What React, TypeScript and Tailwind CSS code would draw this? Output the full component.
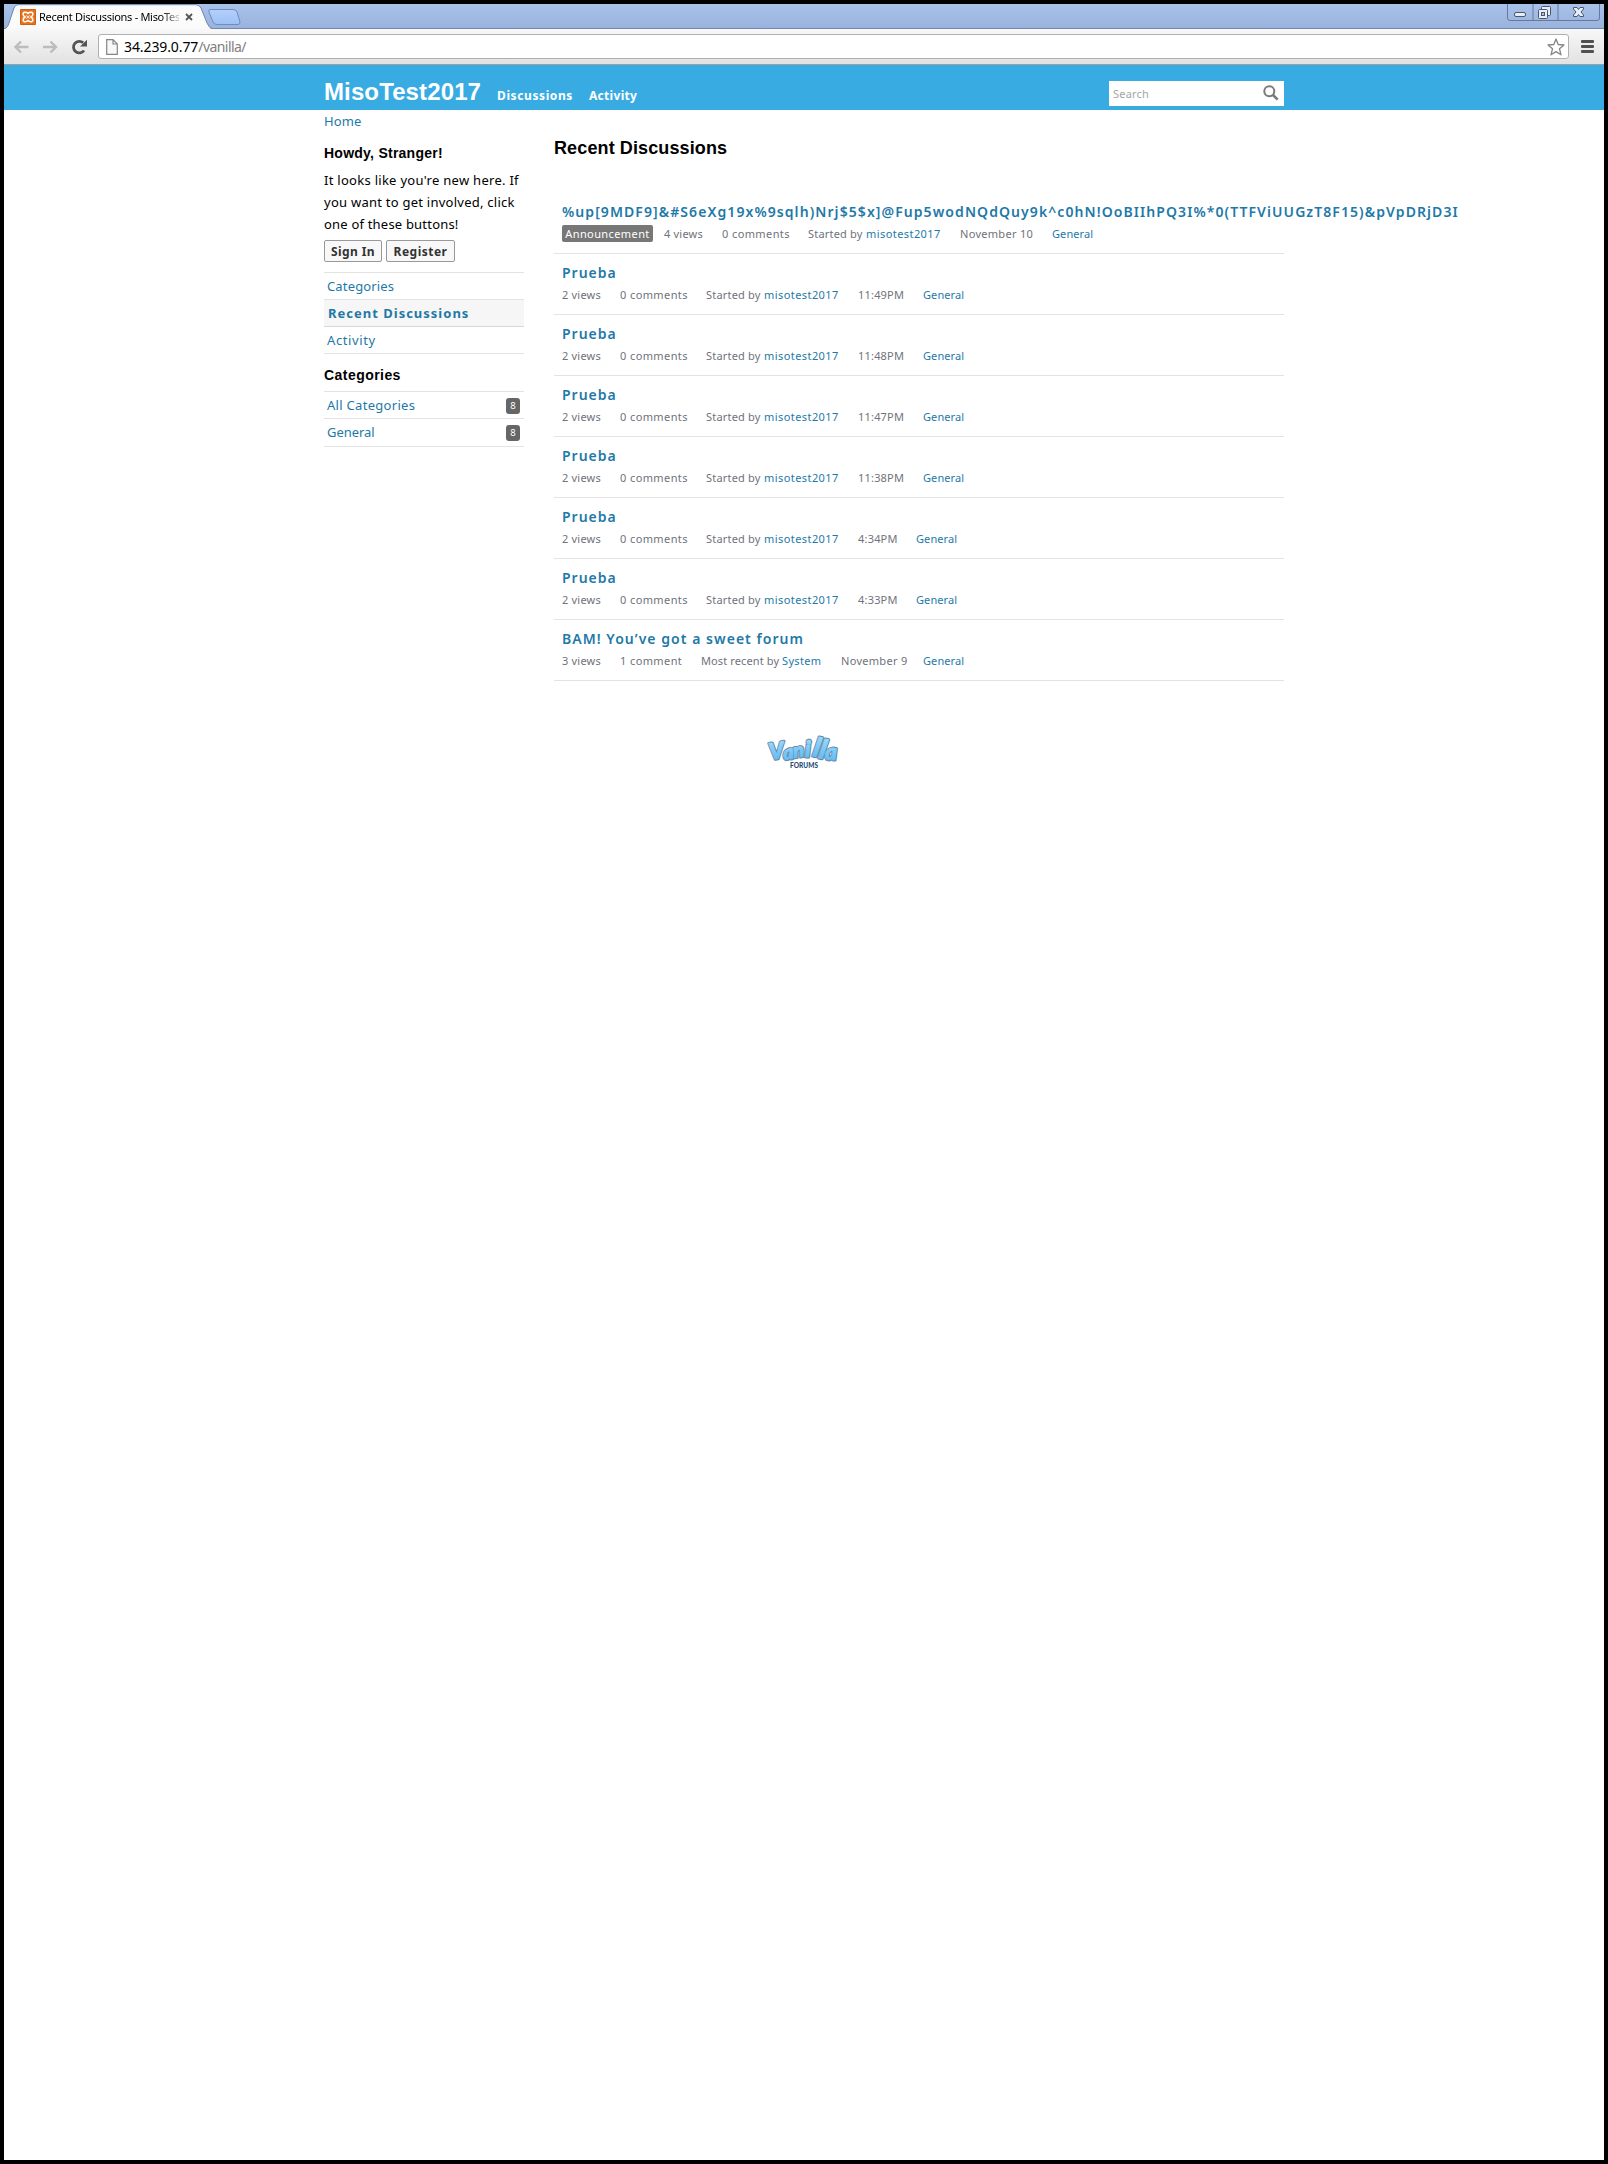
type Discussion = {
  title: string;
  titleClass: string;
  announcement?: boolean;
  views: string;
  comments: string;
  commentsClass: string;
  label: string;
  labelClass: string;
  author: string;
  authorClass: string;
  date: string;
  dateClass: string;
};

const prueba = (date: string, dateClass: string): Discussion => ({
  title: 'Prueba',
  titleClass: 'tracking-[1px]',
  views: '2 views',
  comments: '0 comments',
  commentsClass: 'w-[86px] tracking-[0.4px]',
  label: 'Started by',
  labelClass: 'w-[58px]',
  author: 'misotest2017',
  authorClass: 'w-[94px] tracking-[0.43px]',
  date,
  dateClass,
});

const discussions: Discussion[] = [
  {
    ...prueba('November 10', 'w-[92px] tracking-[0.3px]'),
    title: '%up[9MDF9]&#S6eXg19x%9sqlh)Nrj$5$x]@Fup5wodNQdQuy9k^c0hN!OoBIIhPQ3I%*0(TTFViUUGzT8F15)&pVpDRjD3I',
    titleClass: 'tracking-[1.075px]',
    announcement: true,
    views: '4 views',
  },
  prueba('11:49PM', 'w-[65px]'),
  prueba('11:48PM', 'w-[65px]'),
  prueba('11:47PM', 'w-[65px]'),
  prueba('11:38PM', 'w-[65px]'),
  prueba('4:34PM', 'w-[58px]'),
  prueba('4:33PM', 'w-[58px]'),
  {
    title: 'BAM! You’ve got a sweet forum',
    titleClass: 'tracking-[1.04px]',
    views: '3 views',
    comments: '1 comment',
    commentsClass: 'w-[81px] tracking-[0.4px]',
    label: 'Most recent by',
    labelClass: 'w-[81px] tracking-[0.12px]',
    author: 'System',
    authorClass: 'w-[59px] tracking-[0.35px]',
    date: 'November 9',
    dateClass: 'w-[82px] tracking-[0.3px]',
  },
];

function TabStrip() {
  return (
    <div className="relative flex h-[25px] border-b border-[#7187ae] bg-linear-to-b from-[#a9c2ea] to-[#9ab3de]">
      <svg className="absolute left-0 top-0" width="260" height="25" viewBox="0 0 260 25">
        <defs>
          <linearGradient id="newtab" x1="0" y1="0" x2="0" y2="1">
            <stop offset="0" stopColor="#b3d0fb" />
            <stop offset="1" stopColor="#9cc0f5" />
          </linearGradient>
        </defs>
        <path d="M0 25C3 24 4 22 5 19L10 4Q11 .7 14 .7H192Q195 .7 197 4L203 19Q205 24 209 25Z" fill="#fbfbfb" stroke="#7187ae" />
        <rect x="2" y="24" width="204" height="1" fill="#f8f8f8" />
        <path d="M206 5.500H229Q232 5.500 233 8L236 18Q236 20.500 234 20.500H213Q210 20.500 209 18L205 8Q204 5.500 206 5.500Z" fill="url(#newtab)" stroke="#6f8cbb" />
      </svg>
      <div className="relative ml-4 mt-[5px] flex h-4 items-center">
        <svg width="16" height="16" viewBox="0 0 16 16">
          <rect width="16" height="16" rx="1" fill="#e8731c" />
          <rect x="0.500" y="0.500" width="15" height="15" rx="1" fill="none" stroke="#cf5f12" />
          <path d="M8 4.500Q6.500 3 4.500 3.300Q2.600 4 3.300 6Q3.800 7.300 5 8Q3.800 8.700 3.300 10Q2.600 12 4.500 12.700Q6.500 13 8 11.500Q9.500 13 11.500 12.700Q13.400 12 12.700 10Q12.200 8.700 11 8Q12.200 7.300 12.700 6Q13.400 4 11.500 3.300Q9.500 3 8 4.500ZM6.500 6V6.600M9.500 6V6.600M6.500 9.400V10M9.500 9.400V10M6.800 8H9.200" fill="none" stroke="#fff" strokeWidth="1.500" />
        </svg>
        <span className="ml-[3px] w-[140px] overflow-hidden whitespace-nowrap bg-linear-to-r from-black from-85% to-[#ccc] bg-clip-text font-['Noto_Sans'] text-[11px] leading-4 tracking-[-0.3px] text-transparent">
          Recent Discussions - MisoTes
        </span>
        <svg className="ml-[6px]" width="8" height="8" viewBox="0 0 8 8">
          <path d="M1 1L7 7M7 1L1 7" stroke="#555" strokeWidth="1.800" />
        </svg>
      </div>
      <svg className="absolute right-1 top-0" width="93" height="18" viewBox="0 0 93 18">
        <path d="M.5 0V14Q.5 16.500 3 16.500H90Q92.500 16.500 92.500 14V0M26 0V16M51 0V16" fill="none" stroke="#667a9d" />
        <g fill="#e6eefb" stroke="#4c5669">
          <rect x="7.500" y="8.500" width="11" height="4" rx="1.500" />
          <rect x="34.500" y="2.500" width="9" height="9" rx="1" />
          <rect x="31.500" y="5.500" width="9" height="9" rx="1" />
          <rect x="34.500" y="8.500" width="3" height="3" fill="#a9c2ea" />
          <path d="M66.500 3.500H70L71.500 5.500L73 3.500H76.500V5L74 8L76.500 11V12.500H73L71.500 10.500L70 12.500H66.500V11L69 8L66.500 5Z" />
        </g>
      </svg>
    </div>
  );
}

function Toolbar() {
  return (
    <div className="flex h-9 items-center border-b border-[#a0a0a0] bg-linear-to-b from-[#f8f8f8] to-[#e2e2e2]">
      <svg className="ml-[9px]" width="16" height="14" viewBox="0 0 16 14">
        <path d="M15.500 7H3M8 1.500L2.500 7L8 12.500" fill="none" stroke="#bcbcbc" strokeWidth="2.400" />
      </svg>
      <svg className="ml-[13px]" width="16" height="14" viewBox="0 0 16 14">
        <path d="M1 7H14M8.500 1.500L14 7L8.500 12.500" fill="none" stroke="#bcbcbc" strokeWidth="2.400" />
      </svg>
      <svg className="ml-[13px]" width="17" height="16" viewBox="0 0 17 16">
        <path d="M13 11.500A5.800 5.800 0 1 1 12.200 3.800" fill="none" stroke="#545454" strokeWidth="2.800" />
        <path d="M16 .8V7.500H9Z" fill="#545454" />
      </svg>
      <div className="ml-[10px] flex h-[25px] w-[1471px] items-center rounded-[3px] border border-[#b0b0b0] bg-white">
        <svg className="ml-[7px]" width="12" height="16" viewBox="0 0 12 16">
          <path d="M.7 .7H7L11.300 5V15.300H.7ZM7 .7V5H11.300" fill="#f8f8f8" stroke="#858585" strokeWidth="1.200" />
        </svg>
        <span className="ml-[6px] font-['Noto_Sans'] text-[14px] leading-5 tracking-[-0.1px] text-black">
          34.239.0.77<span className="tracking-[-0.55px] text-[#808080]">/vanilla/</span>
        </span>
        <svg className="ml-auto mr-[3px]" width="18" height="18" viewBox="0 0 18 18">
          <path d="M9 1L11.200 6.500L17 7L12.500 10.800L14 16.800L9 13.600L4 16.800L5.500 10.800L1 7L6.800 6.500Z" fill="#fff" stroke="#858585" strokeWidth="1.300" strokeLinejoin="round" />
        </svg>
      </div>
      <div className="ml-[12px] flex flex-col gap-[2px]">
        <i className="h-[3px] w-[13px] rounded-[1px] bg-[#505050]" />
        <i className="h-[3px] w-[13px] rounded-[1px] bg-[#505050]" />
        <i className="h-[3px] w-[13px] rounded-[1px] bg-[#505050]" />
      </div>
    </div>
  );
}

function SiteHeader() {
  return (
    <header className="h-[45px] bg-[#38abe3]">
      <div className="mx-auto flex h-full w-[960px] text-white">
        <h1 className="w-[173px] pt-[13px] font-['Liberation_Sans'] text-2xl font-bold leading-[28px] tracking-[0.12px]">MisoTest2017</h1>
        <nav className="flex pt-[21px] font-['Noto_Sans'] text-xs font-bold leading-5">
          <a className="w-[92px] tracking-[0.6px]">Discussions</a>
          <a className="tracking-[0.3px]">Activity</a>
        </nav>
        <div className="ml-auto mt-4 flex h-[25px] w-[175px] justify-between bg-white pl-1 pr-[5px]">
          <span className="pt-[2px] font-['Noto_Sans'] text-[11px] leading-[21px] tracking-[0.2px] text-[#a5a5a5]">Search</span>
          <svg className="mt-1" width="16" height="16" viewBox="0 0 16 16">
            <circle cx="6.300" cy="6.200" r="5" fill="none" stroke="#7b7b7b" strokeWidth="2" />
            <path d="M10 10L14.700 14.700" stroke="#7b7b7b" strokeWidth="2.600" />
          </svg>
        </div>
      </div>
    </header>
  );
}

function Count() {
  return <span className="mr-1 h-4 w-[14px] rounded-[3px] bg-[#666] text-center text-[9.500px] leading-4 text-white">8</span>;
}

function Sidebar() {
  return (
    <aside className="w-[200px] font-['Noto_Sans'] text-[13px]">
      <h4 className="mt-[10px] font-['Liberation_Sans'] text-sm font-bold leading-5 tracking-[0.25px] text-black">Howdy, Stranger!</h4>
      <p className="mt-[6px] whitespace-nowrap leading-[22px] text-black">
        <span className="block tracking-[0.28px]">It looks like you're new here. If</span>
        <span className="block tracking-[0.25px]">you want to get involved, click</span>
        <span className="block tracking-[0.2px]">one of these buttons!</span>
      </p>
      <div className="mt-[5px] flex gap-1 font-bold text-[#333]">
        <button className="h-[22px] w-[58px] rounded-[2px] border border-[#999] bg-[#f8f8f8] pt-px text-[12px] leading-5 tracking-[0.4px]">Sign In</button>
        <button className="h-[22px] w-[69px] rounded-[2px] border border-[#999] bg-[#f8f8f8] pt-px text-[12px] leading-5 tracking-[0.5px]">Register</button>
      </div>
      <ul className="mt-[10px] border-t border-[#e3e3e3] text-[#1e79a7]">
        <li className="h-[27px] border-b border-[#e3e3e3] pl-[3px] leading-[27px] tracking-[0.15px]">Categories</li>
        <li className="h-[27px] border-b border-[#d8d8d8] bg-[#f6f6f6] pl-1 font-bold leading-[27px] tracking-[1px]">Recent Discussions</li>
        <li className="h-[27px] border-b border-[#e3e3e3] pl-[3px] leading-[27px] tracking-[0.6px]">Activity</li>
      </ul>
      <h4 className="mt-[11px] font-['Liberation_Sans'] text-sm font-bold leading-5 tracking-[0.45px] text-black">Categories</h4>
      <ul className="mt-[6px] border-t border-[#e3e3e3] text-[#1e79a7]">
        <li className="flex h-[27px] items-center justify-between border-b border-[#e3e3e3] pl-[3px] pt-px tracking-[0.3px]">
          All Categories
          <Count />
        </li>
        <li className="flex h-7 items-center justify-between border-b border-[#e3e3e3] pl-[3px] tracking-[-0.05px]">
          General
          <Count />
        </li>
      </ul>
    </aside>
  );
}

function DiscussionRow({ item }: { item: Discussion }) {
  return (
    <li className="h-[61px] border-b border-[#e3e3e3] pl-2 pt-[9px] font-['Noto_Sans']">
      <a className={`block whitespace-nowrap text-sm font-semibold leading-5 text-[#1e79a7] ${item.titleClass}`}>{item.title}</a>
      <div className="mt-[3px] flex h-[17px] whitespace-nowrap text-[11px] leading-[18px] tracking-[0.2px] text-[#70727c]">
        {item.announcement && (
          <span className="mr-[11px] w-[91px] rounded-[2px] bg-[#777] text-center tracking-[0.4px] text-white">Announcement</span>
        )}
        <span className="w-[58px]">{item.views}</span>
        <span className={item.commentsClass}>{item.comments}</span>
        <span className={item.labelClass}>{item.label}</span>
        <a className={`text-[#1e79a7] ${item.authorClass}`}>{item.author}</a>
        <span className={item.dateClass}>{item.date}</span>
        <a className="tracking-[0.1px] text-[#1e79a7]">General</a>
      </div>
    </li>
  );
}

const letters = [
  { c: 'V', x: 2, y: 26, r: -8, s: 23 },
  { c: 'a', x: 16, y: 26, r: -8, s: 20 },
  { c: 'n', x: 26, y: 24, r: -8, s: 20 },
  { c: 'i', x: 37, y: 23, r: 0, s: 23 },
  { c: 'l', x: 44, y: 22, r: 12, s: 27 },
  { c: 'l', x: 50, y: 24, r: 12, s: 27 },
  { c: 'a', x: 57, y: 26, r: 0, s: 23 },
];

function VanillaLogo() {
  return (
    <svg className="overflow-visible" width="72" height="34" viewBox="0 0 72 34">
      <defs>
        <linearGradient id="vanilla" x1="0" y1="0" x2="0" y2="1">
          <stop offset="0" stopColor="#a5e1ff" />
          <stop offset="1" stopColor="#59b4ee" />
        </linearGradient>
      </defs>
      {['#66829f', 'url(#vanilla)'].map((paint, layer) => (
        <g key={paint} fill={paint} stroke={paint} strokeWidth={layer ? 1 : 2.800} strokeLinejoin="round" fontFamily="Lato" fontWeight="900" fontStyle="italic">
          {letters.map((l) => (
            <text key={l.x} x={l.x} y={l.y} fontSize={l.s} transform={`rotate(${l.r} ${l.x} ${l.y})`}>
              {l.c}
            </text>
          ))}
        </g>
      ))}
      <text x="22" y="33.500" fontSize="6.500" textLength="28" fontFamily="Lato" fontWeight="900" fill="#234a74">FORUMS</text>
    </svg>
  );
}

export default function App() {
  return (
    <div className="h-[2164px] w-[1608px] overflow-hidden bg-black p-1">
      <div className="h-full bg-white">
        <TabStrip />
        <Toolbar />
        <SiteHeader />
        <div className="mx-auto w-[960px]">
          <div className="h-[23px] font-['Noto_Sans'] text-[13px] leading-[22px] tracking-[0.1px] text-[#1e79a7]">Home</div>
          <div className="flex">
            <div className="w-[230px]">
              <Sidebar />
            </div>
            <main className="w-[730px]">
              <h2 className="h-[60px] pt-px font-['Liberation_Sans'] text-lg font-bold leading-[29px] tracking-[0.12px] text-black">Recent Discussions</h2>
              <ul>
                {discussions.map((item) => (
                  <DiscussionRow key={item.title + item.date} item={item} />
                ))}
              </ul>
            </main>
          </div>
          <footer className="flex justify-center pt-[53px]">
            <VanillaLogo />
          </footer>
        </div>
      </div>
    </div>
  );
}
